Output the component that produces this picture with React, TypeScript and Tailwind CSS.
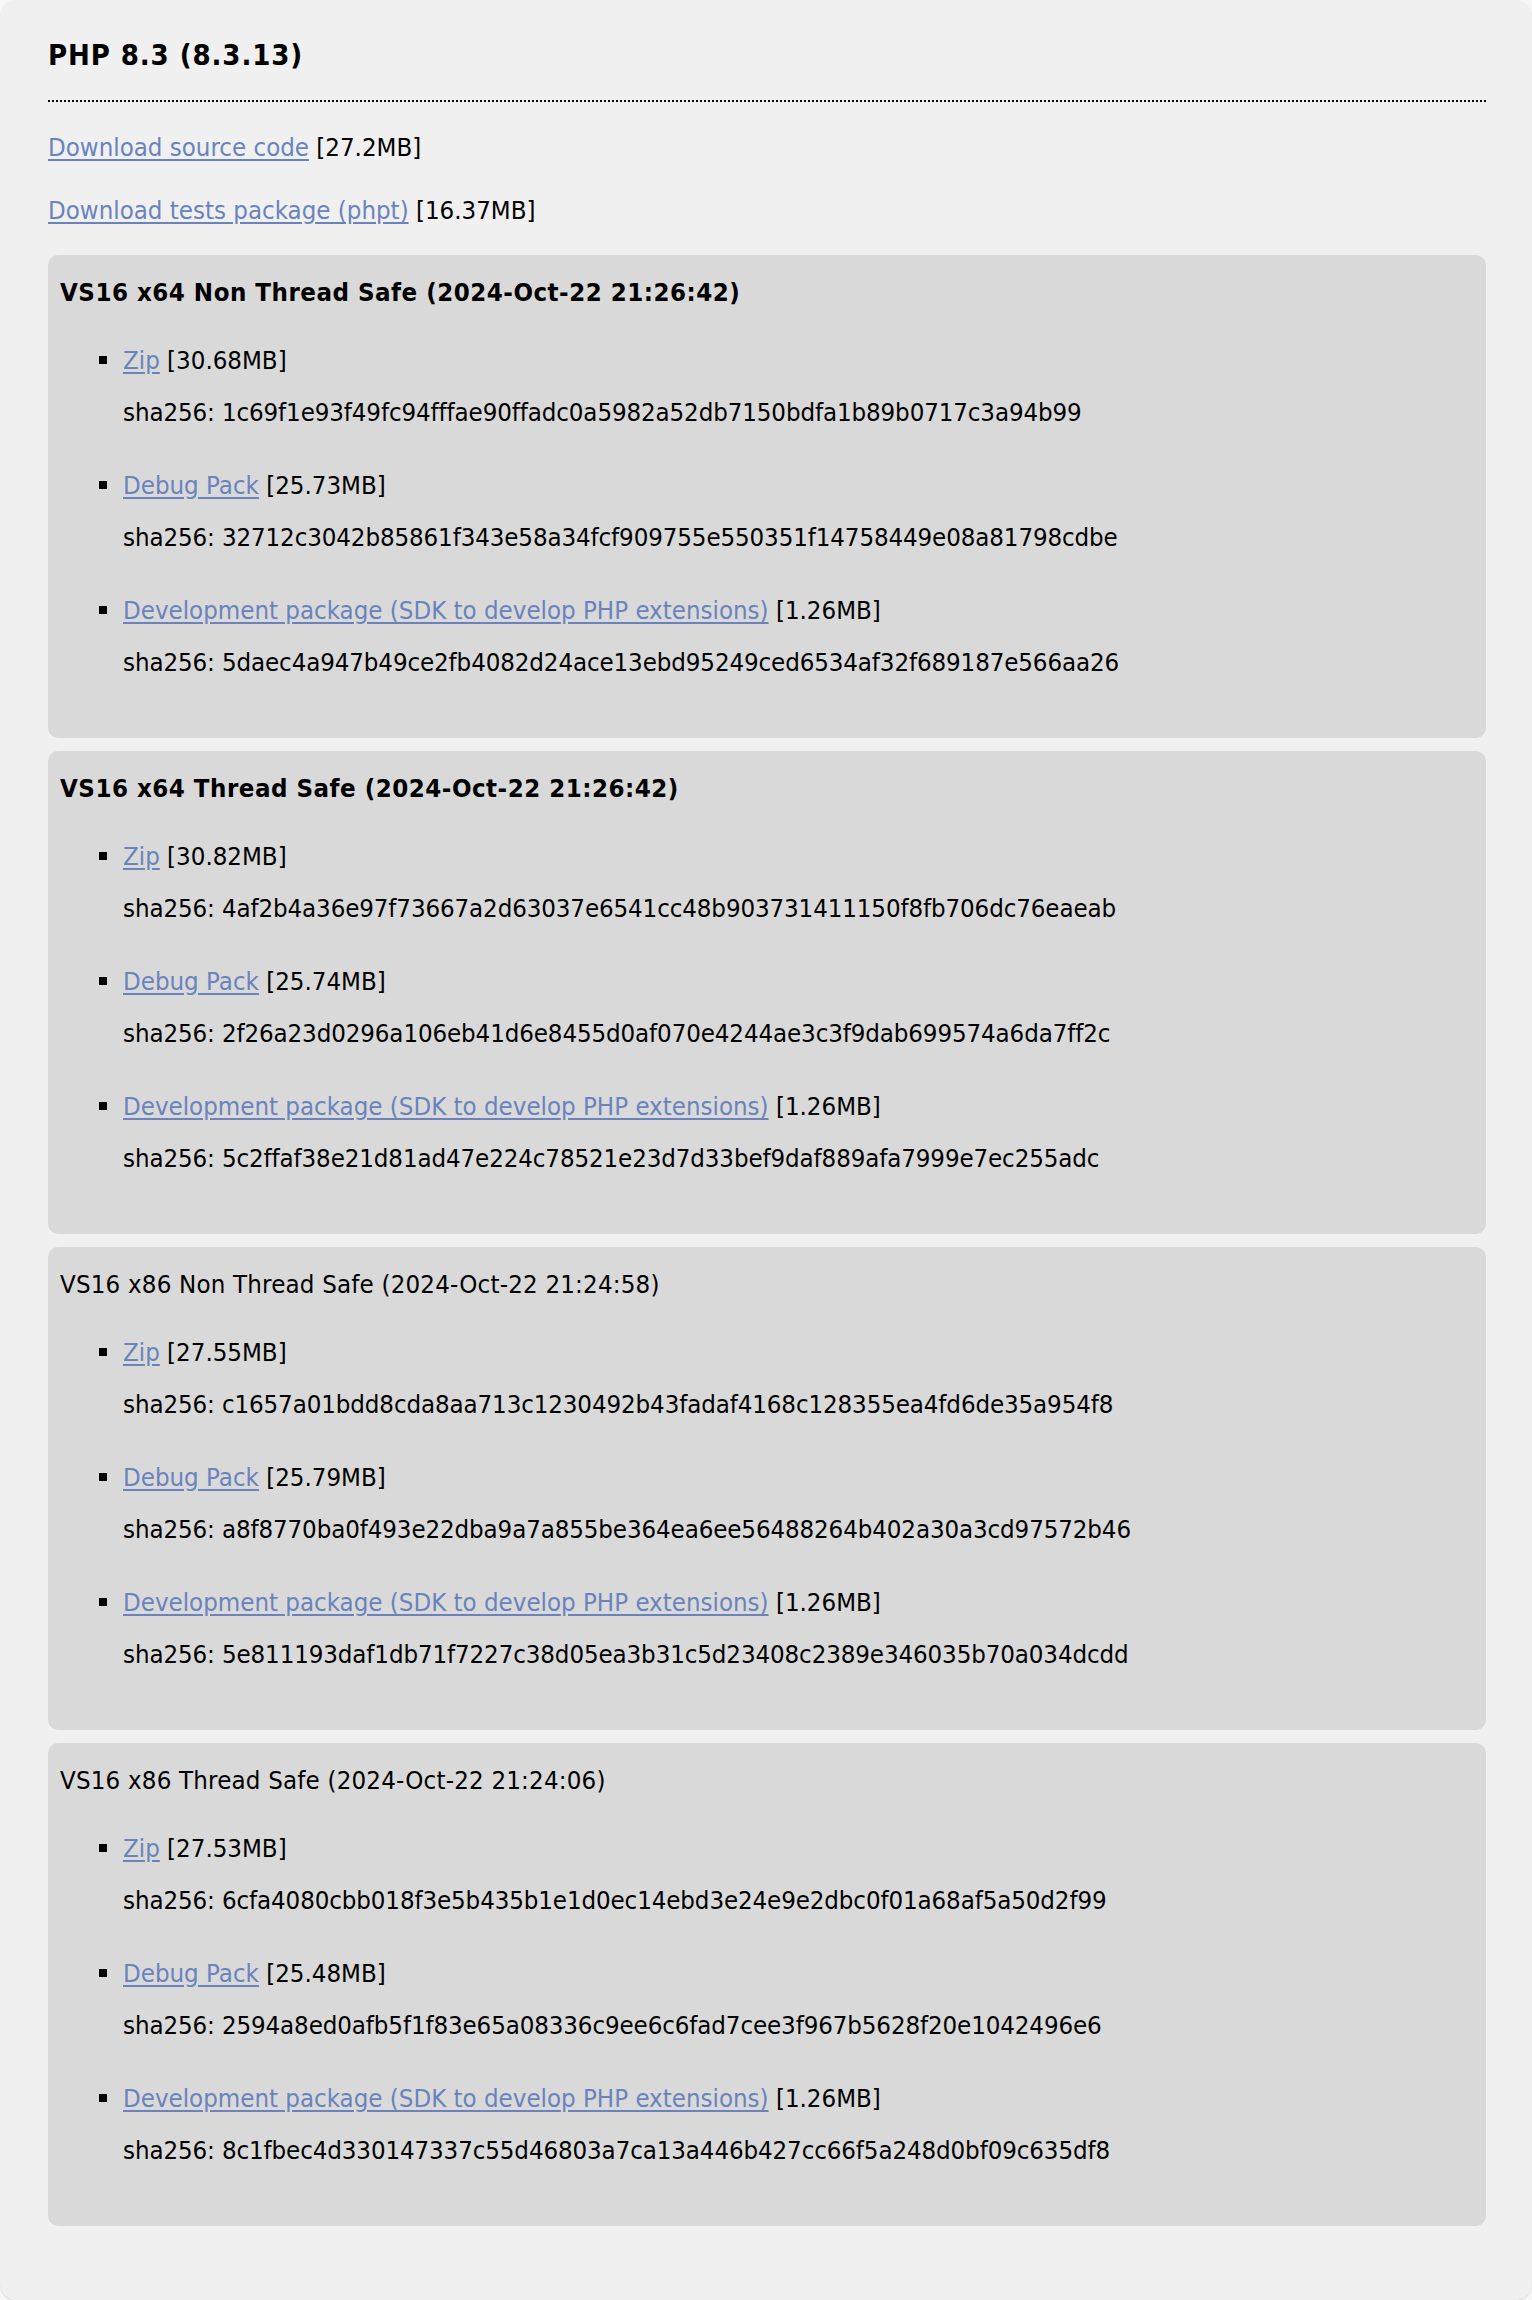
import React from "react";

type Item = { label: string; size: string; sha: string };
type Build = { title: string; bold: boolean; items: Item[] };

const DEV = "Development package (SDK to develop PHP extensions)";

const builds: Build[] = [
  {
    title: "VS16 x64 Non Thread Safe (2024-Oct-22 21:26:42)",
    bold: true,
    items: [
      { label: "Zip", size: "[30.68MB]", sha: "1c69f1e93f49fc94fffae90ffadc0a5982a52db7150bdfa1b89b0717c3a94b99" },
      { label: "Debug Pack", size: "[25.73MB]", sha: "32712c3042b85861f343e58a34fcf909755e550351f14758449e08a81798cdbe" },
      { label: DEV, size: "[1.26MB]", sha: "5daec4a947b49ce2fb4082d24ace13ebd95249ced6534af32f689187e566aa26" },
    ],
  },
  {
    title: "VS16 x64 Thread Safe (2024-Oct-22 21:26:42)",
    bold: true,
    items: [
      { label: "Zip", size: "[30.82MB]", sha: "4af2b4a36e97f73667a2d63037e6541cc48b903731411150f8fb706dc76eaeab" },
      { label: "Debug Pack", size: "[25.74MB]", sha: "2f26a23d0296a106eb41d6e8455d0af070e4244ae3c3f9dab699574a6da7ff2c" },
      { label: DEV, size: "[1.26MB]", sha: "5c2ffaf38e21d81ad47e224c78521e23d7d33bef9daf889afa7999e7ec255adc" },
    ],
  },
  {
    title: "VS16 x86 Non Thread Safe (2024-Oct-22 21:24:58)",
    bold: false,
    items: [
      { label: "Zip", size: "[27.55MB]", sha: "c1657a01bdd8cda8aa713c1230492b43fadaf4168c128355ea4fd6de35a954f8" },
      { label: "Debug Pack", size: "[25.79MB]", sha: "a8f8770ba0f493e22dba9a7a855be364ea6ee56488264b402a30a3cd97572b46" },
      { label: DEV, size: "[1.26MB]", sha: "5e811193daf1db71f7227c38d05ea3b31c5d23408c2389e346035b70a034dcdd" },
    ],
  },
  {
    title: "VS16 x86 Thread Safe (2024-Oct-22 21:24:06)",
    bold: false,
    items: [
      { label: "Zip", size: "[27.53MB]", sha: "6cfa4080cbb018f3e5b435b1e1d0ec14ebd3e24e9e2dbc0f01a68af5a50d2f99" },
      { label: "Debug Pack", size: "[25.48MB]", sha: "2594a8ed0afb5f1f83e65a08336c9ee6c6fad7cee3f967b5628f20e1042496e6" },
      { label: DEV, size: "[1.26MB]", sha: "8c1fbec4d330147337c55d46803a7ca13a446b427cc66f5a248d0bf09c635df8" },
    ],
  },
];

function BuildBox({ build }: { build: Build }) {
  return (
    <div className="rounded-[10px] bg-[#d9d9d9] pl-[12px] pr-4 pt-[23px] pb-[62px]">
      <h3
        className={
          build.bold
            ? "font-bold leading-[28px] tracking-[0.5px]"
            : "font-normal leading-[28px] tracking-[0.2px]"
        }
      >
        {build.title}
      </h3>
      <ul className="mt-[40px] flex flex-col gap-[45px]">
        {build.items.map((it) => (
          <li key={it.label} className="pl-[63px]">
            <div className="relative leading-[28px]">
              <span className="absolute left-[-24px] top-[10px] h-[8px] w-[8px] bg-black" />
              <a href="#" className="text-[#6a83bd] underline underline-offset-[3px]">
                {it.label}
              </a>{" "}
              {it.size}
            </div>
            <div className="mt-[24px] leading-[28px] tracking-[-0.1px]">sha256: {it.sha}</div>
          </li>
        ))}
      </ul>
    </div>
  );
}

export default function App() {
  return (
    <div
      className="min-h-[2300px] bg-[#f7f7f7] text-black"
      style={{ fontFamily: '"DejaVu Sans Condensed", "DejaVu Sans", sans-serif' }}
    >
      <div className="min-h-[2300px] rounded-[16px] bg-[#f0f0f0] pl-[48px] pr-[46px] text-[25.6px] shadow-[0_1px_1px_rgba(0,0,0,0.12)]">
        <h2 className="border-b-2 border-dotted border-black pt-[37px] pb-[27px] text-[29px] font-bold leading-[36px] tracking-[0.9px]">
          PHP 8.3 (8.3.13)
        </h2>
        <p className="mt-[31px] leading-[28px]">
          <a href="#" className="text-[#6a83bd] underline underline-offset-[3px]">
            Download source code
          </a>{" "}
          [27.2MB]
        </p>
        <p className="mt-[35px] leading-[28px]">
          <a href="#" className="text-[#6a83bd] underline underline-offset-[3px]">
            Download tests package (phpt)
          </a>{" "}
          [16.37MB]
        </p>
        <div className="mt-[31px] flex flex-col gap-[13px]">
          {builds.map((b) => (
            <BuildBox key={b.title} build={b} />
          ))}
        </div>
      </div>
    </div>
  );
}
